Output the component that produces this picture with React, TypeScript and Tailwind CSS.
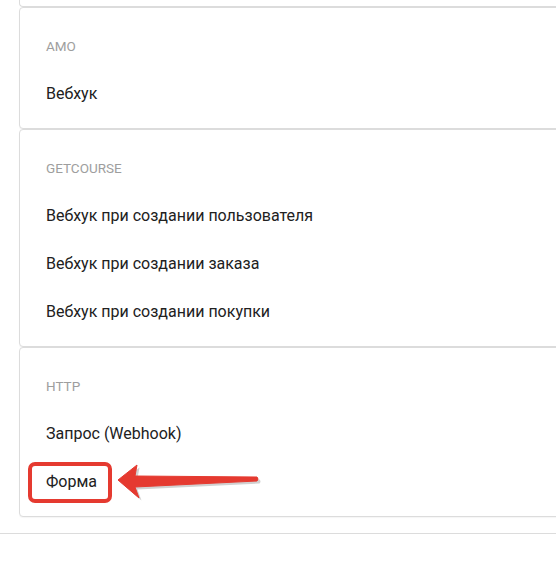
import React from "react";

function Label({ children }: { children: React.ReactNode }) {
  return (
    <div className="h-12 flex items-center text-[13.5px] text-[#9e9e9e] uppercase">
      {children}
    </div>
  );
}

function Item({ children }: { children: React.ReactNode }) {
  return <div className="h-12 flex items-center text-[16px] text-[#212121]">{children}</div>;
}

function Card({ children }: { children: React.ReactNode }) {
  return (
    <div className="-mr-8 border border-[#dcdcdc] rounded-[4px] bg-white pl-[26px] pt-[14px] pb-[10px] shadow-[0_1px_1px_rgba(0,0,0,0.04)]">
      {children}
    </div>
  );
}

export default function App() {
  return (
    <div
      className="w-[556px] h-[572px] bg-white overflow-hidden relative"
      style={{ fontFamily: "Roboto, 'Noto Sans', Arial, sans-serif" }}
    >
      <div className="pl-[19px]">
        <div className="-mr-8 h-[7px] border-l border-b border-[#dcdcdc] rounded-bl-[4px]" />
        <Card>
          <Label>AMO</Label>
          <Item>Вебхук</Item>
        </Card>
        <Card>
          <Label>GETCOURSE</Label>
          <Item>Вебхук при создании пользователя</Item>
          <Item>Вебхук при создании заказа</Item>
          <Item>Вебхук при создании покупки</Item>
        </Card>
        <Card>
          <Label>HTTP</Label>
          <Item>Запрос (Webhook)</Item>
          <div className="relative">
            <Item>Форма</Item>
            <div className="absolute left-[-18px] top-[4px] w-[84px] h-[41px] border-[4px] border-[#e53a30] rounded-[7px]" />
            <svg
              className="absolute left-[64px] top-0"
              width="160"
              height="48"
              viewBox="0 0 160 48"
            >
              <path
                d="M9 23 L28 8 L26 19 L148 20 Q150 22 148 24 L26 30 L30 41 Z"
                fill="rgba(0,0,0,0.18)"
                transform="translate(1.5,1.5)"
              />
              <path
                d="M8 22 L27 7 L25 18 L147 19 Q149 21 147 23 L25 29 L29 40 Z"
                fill="#e53a30"
                stroke="#e53a30"
                strokeWidth="1"
                strokeLinejoin="round"
              />
            </svg>
          </div>
        </Card>
      </div>
      <div className="mt-4 border-t border-[#dcdcdc]" />
    </div>
  );
}
